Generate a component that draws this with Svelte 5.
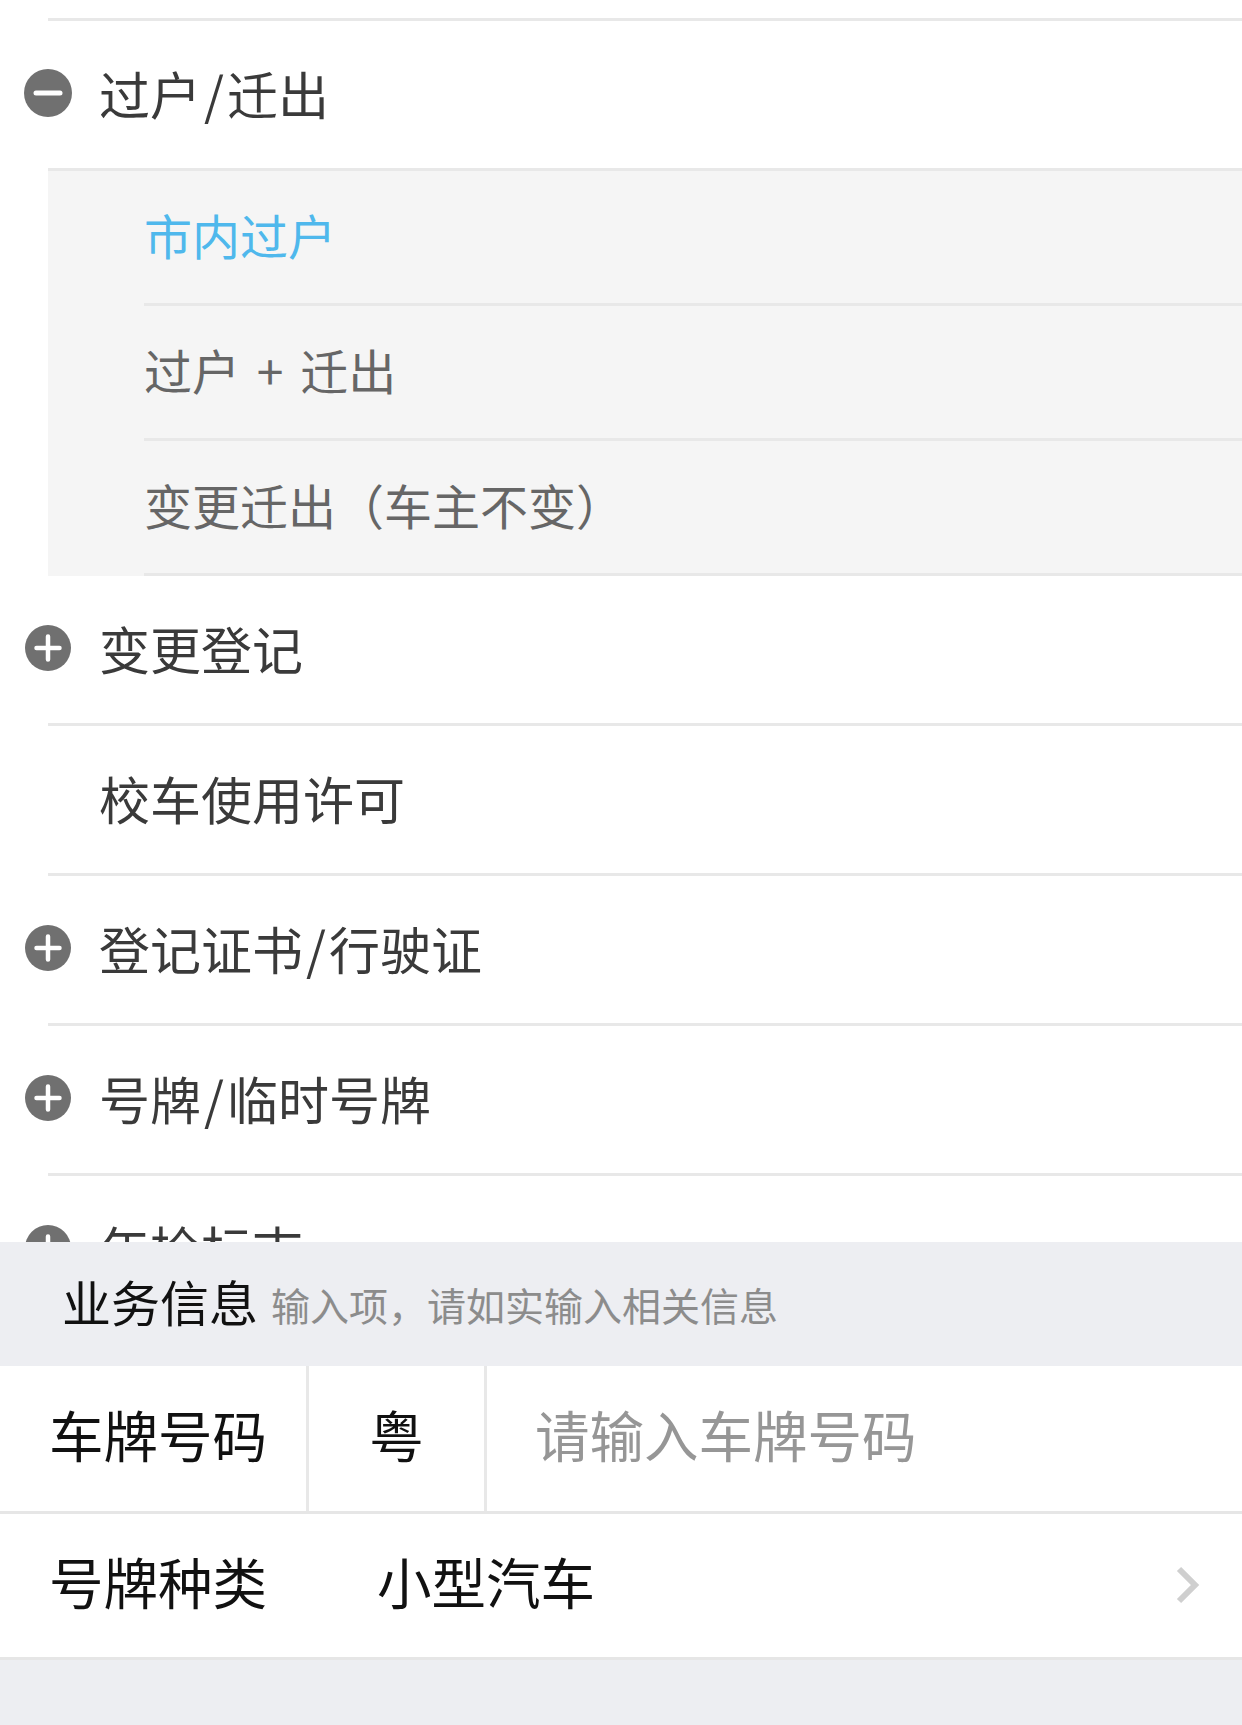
<script>
	const before = { name: '过户/迁出', icon: 'minus' };
	const subs = [
		{ name: '市内过户', active: true },
		{ name: '过户 + 迁出' },
		{ name: '变更迁出（车主不变）' },
	];
	const after = [
		{ name: '变更登记', icon: 'plus' },
		{ name: '校车使用许可' },
		{ name: '登记证书/行驶证', icon: 'plus' },
		{ name: '号牌/临时号牌', icon: 'plus' },
		{ name: '年检标志', icon: 'plus' },
	];
</script>

{#snippet row(item)}
	<div class="row">
		<span class="slot">
			{#if item.icon === 'minus'}
				<svg class="icon" viewBox="0 0 48 48" width="48" height="48">
					<circle cx="24" cy="24" r="24" fill="#707070" />
					<path d="M12 24H36" stroke="#fff" stroke-width="5" stroke-linecap="round" />
				</svg>
			{:else if item.icon === 'plus'}
				<svg class="icon plus" viewBox="0 0 46 46" width="46" height="46">
					<circle cx="23" cy="23" r="23" fill="#707070" />
					<path d="M11.5 23H34.5M23 11.5V34.5" stroke="#fff" stroke-width="4.5" stroke-linecap="round" />
				</svg>
			{/if}
		</span>
		<span class="name">
			{#each item.name.split('/') as part, i}
				{#if i > 0}<span class="slash">/</span>{/if}{part}
			{/each}
		</span>
	</div>
{/snippet}

<main>
	<div class="list">
		{@render row(before)}
		<div class="subs">
			{#each subs as sub}
				<div class="sub" class:active={sub.active}>{sub.name}</div>
			{/each}
		</div>
		{#each after as item}
			{@render row(item)}
		{/each}
	</div>

	<div class="section">
		<span class="section-title">业务信息</span>
		<span class="section-hint">输入项，请如实输入相关信息</span>
	</div>

	<div class="form">
		<div class="field">
			<span class="label">车牌号码</span>
			<span class="prefix">粤</span>
			<span class="placeholder">请输入车牌号码</span>
		</div>
		<div class="field">
			<span class="label plain">号牌种类</span>
			<span class="value">小型汽车</span>
			<svg class="chevron" viewBox="0 0 24 38" width="24" height="38">
				<path d="M3 3L19 19L3 35" fill="none" stroke="#cfcfcf" stroke-width="6" />
			</svg>
		</div>
	</div>
</main>

<style>
	:global(body) {
		background: #edeef2;
	}

	main {
		height: 1725px;
		overflow: hidden;
		font-family: "Noto Sans CJK SC", "Noto Sans", sans-serif;
		background: #edeef2;
	}

	.list {
		height: 1242px;
		overflow: hidden;
		padding-top: 18px;
		box-sizing: border-box;
		background: #fff;
	}

	.row {
		display: flex;
		align-items: center;
		box-sizing: border-box;
		height: 150px;
		margin-left: 48px;
		border-bottom: 3px solid #e8e8e8;
		font-size: 51px;
		color: #3a3a3a;
	}

	.list > .row:first-child {
		height: 153px;
		border-top: 3px solid #e8e8e8;
	}

	.slot {
		flex: none;
		width: 76px;
		margin-left: -24px;
		display: flex;
	}

	.icon {
		display: block;
		margin-top: -4px;
	}

	.icon.plus {
		margin-left: 1px;
	}

	.name {
		display: flex;
		margin-left: -1px;
		padding-bottom: 4px;
	}

	.slash {
		margin: 0 3px;
	}

	.subs {
		margin-left: 48px;
		background: #f5f5f5;
	}

	.sub {
		display: flex;
		align-items: center;
		box-sizing: border-box;
		height: 135px;
		margin-left: 96px;
		padding-bottom: 7px;
		border-bottom: 3px solid #e8e8e8;
		font-size: 48px;
		word-spacing: 6px;
		white-space: pre;
		color: #666;
	}

	.sub.active {
		color: #4fb8ec;
	}

	.section {
		display: flex;
		align-items: center;
		height: 124px;
		padding-left: 62px;
		background: #edeef2;
	}

	.section-title {
		padding-bottom: 8px;
		font-size: 49px;
		color: #111;
	}

	.section-hint {
		margin-left: 13px;
		font-size: 39px;
		color: #8c8c8c;
	}

	.form {
		background: #fff;
	}

	.field {
		display: flex;
		align-items: stretch;
		box-sizing: border-box;
		height: 148px;
		border-bottom: 3px solid #e6e6e6;
		font-size: 54.5px;
		color: #111;
	}

	.field + .field {
		height: 146px;
	}

	.label,
	.prefix,
	.placeholder,
	.value {
		display: flex;
		align-items: center;
		padding-bottom: 10px;
	}

	.label {
		box-sizing: border-box;
		width: 309px;
		padding-left: 49px;
		border-right: 3px solid #e8e8e8;
	}

	.label.plain {
		width: 377px;
		border-right: none;
	}

	.prefix {
		box-sizing: border-box;
		width: 178px;
		justify-content: center;
		border-right: 3px solid #e8e8e8;
	}

	.placeholder {
		padding-left: 48px;
		color: #969696;
	}

	.chevron {
		align-self: center;
		margin-left: auto;
		margin-right: 42px;
		margin-bottom: 2px;
	}
</style>
